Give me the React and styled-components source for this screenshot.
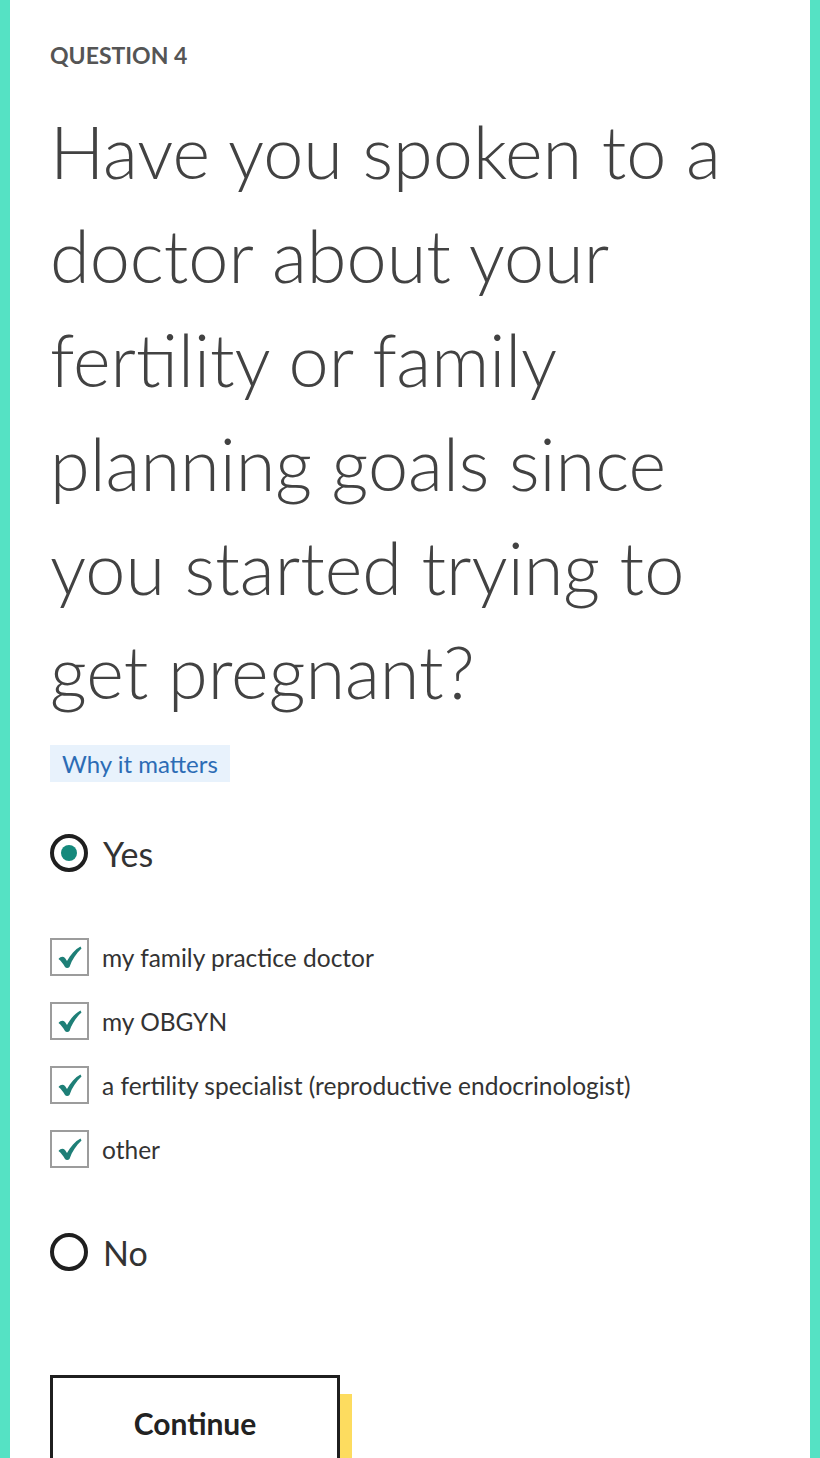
import React from 'react';
import styled, { createGlobalStyle } from 'styled-components';

const colors = {
  teal: '#55e2c4',
  text: '#424242',
  dark: '#1f1f1f',
  radioDot: '#15897c',
  check: '#1e7f77',
  boxBorder: '#9c9c9c',
  link: '#2c6cb5',
  linkBg: '#e8f2fc',
  yellow: '#fddc5f',
};

const GlobalStyle = createGlobalStyle`
  html, body {
    margin: 0;
    padding: 0;
    background: white;
  }
  body {
    font-family: Lato, "Noto Sans", sans-serif;
    color: ${colors.text};
  }
`;

const Frame = styled.div`
  min-height: 100vh;
  border-left: 10px solid ${colors.teal};
  border-right: 10px solid ${colors.teal};
  padding: 41px 40px 0 40px;
  box-sizing: border-box;
  overflow: hidden;
`;

const Eyebrow = styled.div`
  font-size: 23px;
  line-height: 28px;
  font-weight: 700;
  color: #555;
`;

const Question = styled.h1`
  margin: 30px 0 0 0;
  max-width: 700px;
  font-size: 72px;
  line-height: 104px;
  font-weight: 300;
  color: ${colors.text};
`;

const WhyButton = styled.button`
  margin-top: 22px;
  height: 37px;
  padding: 0 12px;
  border: none;
  background: ${colors.linkBg};
  color: ${colors.link};
  font-family: inherit;
  font-size: 24px;
  line-height: 37px;
`;

const Options = styled.div`
  margin-top: 52px;
  display: flex;
  flex-direction: column;
`;

const RadioRow = styled.label`
  display: flex;
  align-items: center;
  gap: 15px;
  height: 38px;
  font-size: 34px;
  color: #333;
  margin-top: ${p => (p.spaced ? '65px' : '0')};
`;

const RadioCircle = styled.span`
  width: 38px;
  height: 38px;
  box-sizing: border-box;
  border: 4px solid ${colors.dark};
  border-radius: 50%;
  display: flex;
  align-items: center;
  justify-content: center;

  &::after {
    content: '';
    display: ${p => (p.checked ? 'block' : 'none')};
    width: 16px;
    height: 16px;
    border-radius: 50%;
    background: ${colors.radioDot};
  }
`;

const SubList = styled.div`
  margin-top: 66px;
  display: flex;
  flex-direction: column;
  gap: 26px;
`;

const CheckRow = styled.label`
  display: flex;
  align-items: center;
  gap: 13px;
  height: 38px;
  font-size: 24.5px;
  color: #333;
`;

const CheckBox = styled.span`
  width: 39px;
  height: 38px;
  box-sizing: border-box;
  border: 2px solid ${colors.boxBorder};
  display: flex;
  align-items: center;
  justify-content: center;
  flex-shrink: 0;
`;

const ContinueButton = styled.button`
  margin-top: 104px;
  width: 290px;
  height: 96px;
  box-sizing: border-box;
  border: 3px solid ${colors.dark};
  background: white;
  box-shadow: 12px 19px 0 ${colors.yellow};
  font-family: inherit;
  font-size: 30px;
  font-weight: 700;
  color: #222;
`;

const CheckMark = () => (
  <svg width="24" height="23" viewBox="0 0 24 23">
    <path
      d="M0.5 13 C 2.5 10.5, 5 10, 7 12 L 9 15 C 12.5 8.5, 17 3.5, 22.5 0.5 L 23.5 2.5 C 18.5 7, 14 13.5, 11.5 21 C 10.5 22.2, 8 22.5, 7 21 C 5 17.5, 3 15, 0.5 13 Z"
      fill={colors.check}
    />
  </svg>
);

const doctors = [
  'my family practice doctor',
  'my OBGYN',
  'a fertility specialist (reproductive endocrinologist)',
  'other',
];

const App = () => (
  <>
    <GlobalStyle />
    <Frame>
      <Eyebrow>QUESTION 4</Eyebrow>
      <Question>
        Have you spoken to a doctor about your fertility or family planning goals since you started trying to get pregnant?
      </Question>
      <WhyButton>Why it matters</WhyButton>
      <Options>
        <RadioRow>
          <RadioCircle checked />
          Yes
        </RadioRow>
        <SubList>
          {doctors.map(d => (
            <CheckRow key={d}>
              <CheckBox>
                <CheckMark />
              </CheckBox>
              {d}
            </CheckRow>
          ))}
        </SubList>
        <RadioRow spaced>
          <RadioCircle />
          No
        </RadioRow>
      </Options>
      <ContinueButton>Continue</ContinueButton>
    </Frame>
  </>
);

export default App;
